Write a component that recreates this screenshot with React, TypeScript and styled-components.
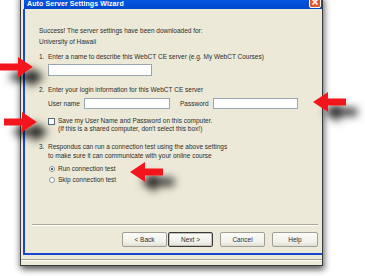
import React from 'react';
import styled, {createGlobalStyle} from 'styled-components';

const GlobalStyle = createGlobalStyle`
  html, body {
    margin: 0;
    padding: 0;
    background: #ffffff;
    overflow: hidden;
  }
  body {
    font-family: "Liberation Sans", Arial, sans-serif;
  }
`

const Canvas = styled.div`
  position: relative;
  width: 365px;
  height: 276px;
  overflow: hidden;
  background: #ffffff;
`

const Window = styled.div`
  box-sizing: border-box;
  width: 303px;
  height: 271px;
  margin: -5px 0 0 20px;
  display: flex;
  flex-direction: column;
  background: #ece9d8;
  border: 1px solid #3c3c3c;
  border-top: none;
  box-shadow: 2px 4px 6px rgba(0, 0, 0, 0.5), -2px 2px 5px rgba(0, 0, 0, 0.25);
`

const TitleBar = styled.div`
  height: 14px;
  margin-left: 3px;
  display: flex;
  align-items: flex-end;
  justify-content: space-between;
  padding: 0 1px 0 3px;
  background: linear-gradient(180deg, #0a5fe8 0%, #0050dc 60%, #0046c8 100%);
  color: #ffffff;
  font-size: 7px;
  font-weight: bold;
  letter-spacing: 0.1px;
`

const TitleText = styled.span`
  line-height: 8px;
  padding-bottom: 1px;
`

const CloseBox = styled.div`
  box-sizing: border-box;
  width: 12px;
  height: 13px;
  margin-bottom: 1px;
  border: 1px solid #ffffff;
  border-radius: 2px;
  background: #e2582c;
  display: flex;
  align-items: center;
  justify-content: center;
`

const Frame = styled.div`
  padding-left: 2px;
  display: flex;
`

const Panel = styled.div`
  box-sizing: border-box;
  flex: 1;
  height: 246px;
  display: flex;
  flex-direction: column;
  border-left: 2px solid #1b46d4;
  border-bottom: 2px solid #1b46d4;
  color: #2c2c2c;
  font-size: 6.5px;
`

const Body = styled.div`
  flex: 1;
  display: flex;
  flex-direction: column;
  padding: 16px 0 0 14px;
`

const Lines = styled.div<{ $lh: number; $mt: number; $indent?: number }>`
  line-height: ${p => p.$lh}px;
  margin-top: ${p => p.$mt}px;
  padding-left: ${p => p.$indent ?? 0}px;
  white-space: nowrap;
`

const Step = styled.div<{ $mt: number }>`
  display: flex;
  line-height: 9px;
  margin-top: ${p => p.$mt}px;
  white-space: nowrap;
`

const StepNum = styled.span`
  width: 9px;
`

const TextInput = styled.div<{ $w: number; $h: number }>`
  box-sizing: border-box;
  width: ${p => p.$w}px;
  height: ${p => p.$h}px;
  background: #ffffff;
  border: 1px solid #9aa5b2;
`

const Indented = styled.div<{ $mt: number }>`
  margin-top: ${p => p.$mt}px;
  padding-left: 9px;
  display: flex;
  align-items: center;
`

const FieldLabel = styled.span<{ $w: number; $ml?: number }>`
  width: ${p => p.$w}px;
  margin-left: ${p => p.$ml ?? 0}px;
  white-space: nowrap;
`

const Check = styled.div`
  box-sizing: border-box;
  width: 7px;
  height: 7px;
  margin-top: 1px;
  background: #ffffff;
  border: 1px solid #5a6a7c;
`

const CheckRow = styled.div<{ $mt: number }>`
  margin-top: ${p => p.$mt}px;
  padding-left: 9px;
  display: flex;
  align-items: flex-start;
  gap: 3px;
`

const RadioRow = styled.div<{ $mt: number }>`
  margin-top: ${p => p.$mt}px;
  padding-left: 10px;
  height: 11px;
  display: flex;
  align-items: center;
  gap: 3px;
  white-space: nowrap;
`

const Radio = styled.div<{ $on?: boolean }>`
  box-sizing: border-box;
  width: 6px;
  height: 6px;
  border-radius: 50%;
  background: #ffffff;
  border: 1px solid #8a96a4;
  display: flex;
  align-items: center;
  justify-content: center;

  &::after {
    content: '';
    width: 2px;
    height: 2px;
    border-radius: 50%;
    background: ${p => (p.$on ? '#2c2c2c' : 'transparent')};
  }
`

const Footer = styled.div`
  padding: 0 4px 6px 7px;
  display: flex;
  flex-direction: column;
`

const Separator = styled.div`
  height: 0;
  border-top: 1px solid #aca899;
  border-bottom: 1px solid #ffffff;
  margin-bottom: 6px;
`

const ButtonRow = styled.div`
  display: flex;
  justify-content: flex-end;
  gap: 7px;
`

const ButtonPair = styled.div`
  display: flex;
  gap: 1px;
`

const WizButton = styled.div<{ $default?: boolean; $w?: number }>`
  box-sizing: border-box;
  width: ${p => p.$w ?? 45}px;
  height: 15px;
  display: flex;
  align-items: center;
  justify-content: center;
  font-size: 6.5px;
  color: #2c2c2c;
  border-radius: 2px;
  background: linear-gradient(180deg, #fbfbf8 0%, #f1f0ea 70%, #e0ded3 100%);
  border: 1px solid ${p => (p.$default ? '#3a3a3a' : '#a19f93')};
  box-shadow: ${p => (p.$default ? 'inset 0 0 0 1px #c4c2b7' : 'none')};
`

const StatusBar = styled.div`
  height: 10px;
  display: flex;
  flex-direction: column;
  justify-content: center;
`

const StatusLine = styled.div`
  border-top: 1px solid #a3a092;
  border-bottom: 1px solid #ffffff;
`

const ArrowSvg = styled.svg<{ $x: number; $y: number }>`
  position: absolute;
  left: ${p => p.$x}px;
  top: ${p => p.$y}px;
  overflow: visible;
`

type ArrowProps = { tipX: number; tipY: number; dir: 'left' | 'right' }

const Arrow = ({tipX, tipY, dir}: ArrowProps) => {
  const len = 33
  const head = 15
  const hh = 10
  const sh = 3.5
  const s = dir === 'right' ? -1 : 1
  const pts = [
    [0, 0],
    [s * head, -hh],
    [s * head, -sh],
    [s * len, -sh],
    [s * len, sh],
    [s * head, sh],
    [s * head, hh],
  ].map(([x, y]) => `${x},${y}`).join(' ')
  const id = `sh-${tipX}-${tipY}`
  return (
    <ArrowSvg $x={tipX} $y={tipY} width="1" height="1">
      <defs>
        <filter id={id} x="-100%" y="-100%" width="300%" height="300%">
          <feDropShadow dx="11" dy="10" stdDeviation="4" floodColor="#000000" floodOpacity="0.9"/>
        </filter>
      </defs>
      <polygon points={pts} fill="#f2181c" filter={`url(#${id})`}/>
    </ArrowSvg>
  )
}

export default function App() {
  return (
    <Canvas>
      <GlobalStyle/>
      <Window>
        <TitleBar>
          <TitleText>Auto Server Settings Wizard</TitleText>
          <CloseBox>
            <svg width="8" height="8" viewBox="0 0 8 8">
              <path d="M1.5 1.5 L6.5 6.5 M6.5 1.5 L1.5 6.5" stroke="#ffffff" strokeWidth="1.6"/>
            </svg>
          </CloseBox>
        </TitleBar>
        <Frame>
          <Panel>
            <Body>
              <Lines $lh={11} $mt={0}>
                <div>Success! The server settings have been downloaded for:</div>
                <div>University of Hawaii</div>
              </Lines>

              <Step $mt={5}>
                <StepNum>1.</StepNum>
                <span>Enter a name to describe this WebCT CE server (e.g. My WebCT Courses)</span>
              </Step>
              <Indented $mt={3}>
                <TextInput $w={104} $h={12}/>
              </Indented>

              <Step $mt={9}>
                <StepNum>2.</StepNum>
                <span>Enter your login information for this WebCT CE server</span>
              </Step>
              <Indented $mt={4}>
                <FieldLabel $w={36}>User name</FieldLabel>
                <TextInput $w={86} $h={11}/>
                <FieldLabel $w={33} $ml={10}>Password</FieldLabel>
                <TextInput $w={85} $h={11}/>
              </Indented>

              <CheckRow $mt={8}>
                <Check/>
                <Lines $lh={8} $mt={0}>
                  <div>Save my User Name and Password on this computer.</div>
                  <div>(If this is a shared computer, don't select this box!)</div>
                </Lines>
              </CheckRow>

              <Step $mt={9}>
                <StepNum>3.</StepNum>
                <span>Respondus can run a connection test using the above settings</span>
              </Step>
              <Lines $lh={9} $mt={0} $indent={9}>
                to make sure it can communicate with your online course
              </Lines>

              <RadioRow $mt={3}>
                <Radio $on/>
                <span>Run connection test</span>
              </RadioRow>
              <RadioRow $mt={0}>
                <Radio/>
                <span>Skip connection test</span>
              </RadioRow>
            </Body>

            <Footer>
              <Separator/>
              <ButtonRow>
                <ButtonPair>
                  <WizButton>&lt; Back</WizButton>
                  <WizButton $default>Next &gt;</WizButton>
                </ButtonPair>
                <WizButton>Cancel</WizButton>
                <WizButton $w={46}>Help</WizButton>
              </ButtonRow>
            </Footer>
          </Panel>
        </Frame>
        <StatusBar>
          <StatusLine/>
        </StatusBar>
      </Window>

      <Arrow tipX={33} tipY={67} dir="right"/>
      <Arrow tipX={313} tipY={102} dir="left"/>
      <Arrow tipX={37} tipY={122} dir="right"/>
      <Arrow tipX={130} tipY={172} dir="left"/>
    </Canvas>
  )
}
